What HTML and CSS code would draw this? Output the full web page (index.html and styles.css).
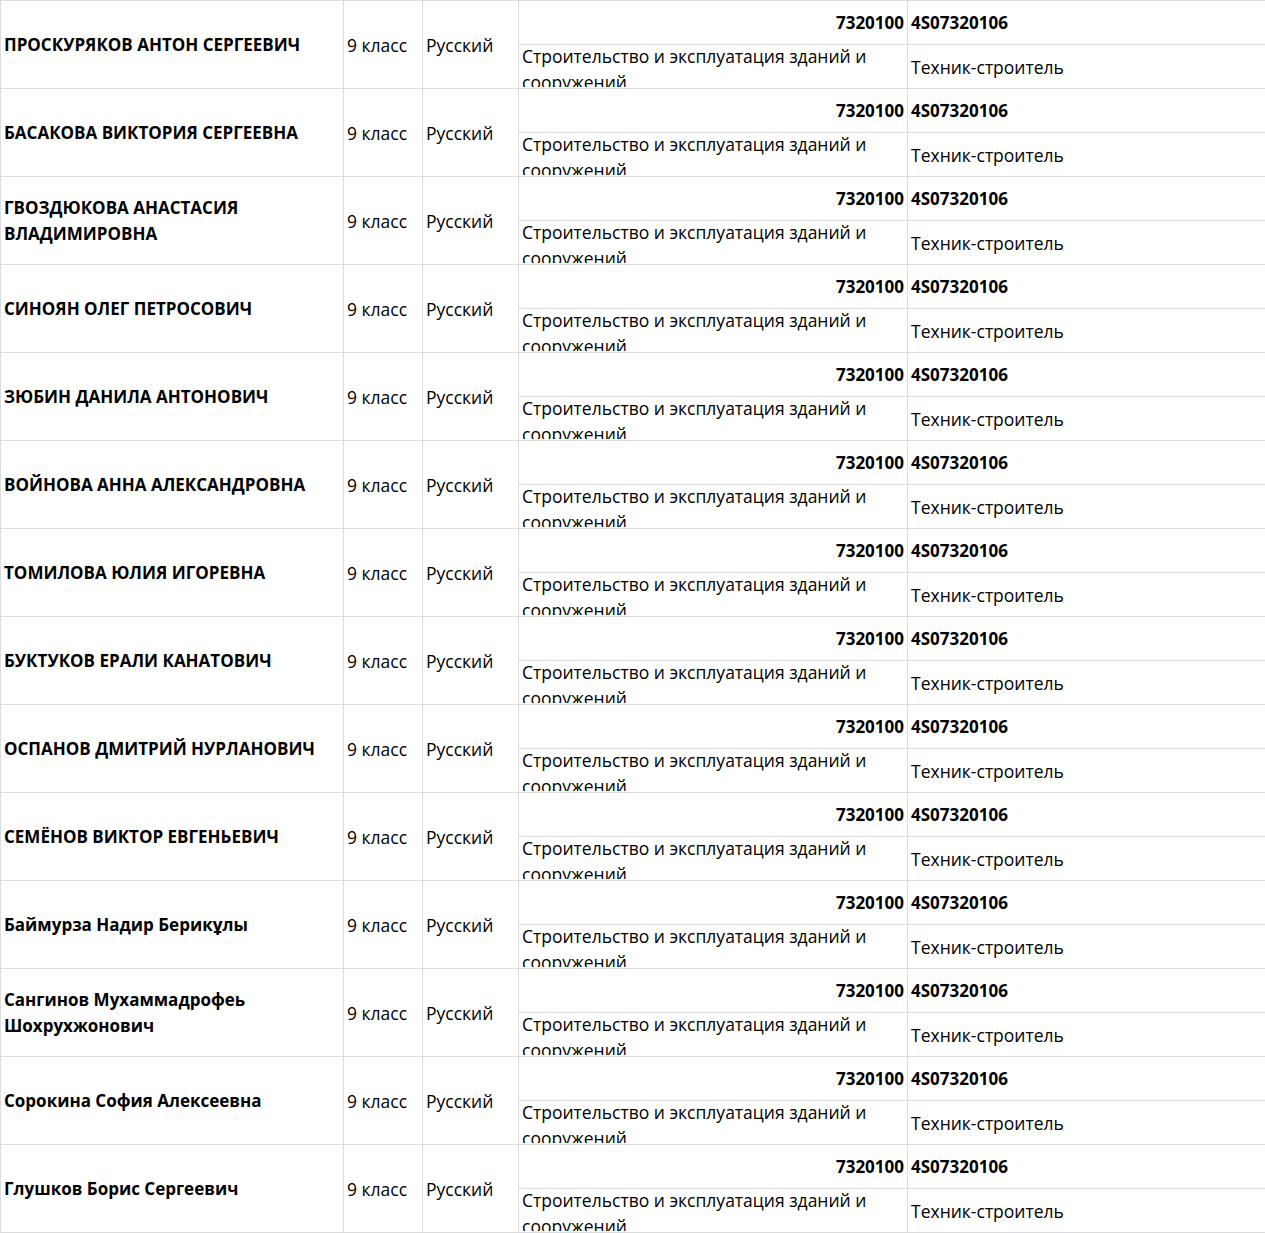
FILE: index.html
```html
<!DOCTYPE html>
<html lang="ru">
<head>
    <meta charset="UTF-8">
    <meta name="viewport" content="width=device-width, initial-scale=1.0">
    <title>Список абитуриентов</title>
    <link rel="stylesheet" href="styles.css">
</head>
<body>
    <table class="sheet">
        <colgroup>
            <col class="col-name">
            <col class="col-grade">
            <col class="col-lang">
            <col class="col-spec">
            <col class="col-qual">
        </colgroup>
        <tbody>
            <tr>
                <td class="name" rowspan="2">ПРОСКУРЯКОВ АНТОН СЕРГЕЕВИЧ</td>
                <td class="plain" rowspan="2">9 класс</td>
                <td class="plain" rowspan="2">Русский</td>
                <td class="code">7320100</td>
                <td class="qcode">4S07320106</td>
            </tr>
            <tr>
                <td class="spec"><div class="spec-text">Строительство и эксплуатация зданий и сооружений</div></td>
                <td class="qual">Техник-строитель</td>
            </tr>

            <tr>
                <td class="name" rowspan="2">БАСАКОВА ВИКТОРИЯ СЕРГЕЕВНА</td>
                <td class="plain" rowspan="2">9 класс</td>
                <td class="plain" rowspan="2">Русский</td>
                <td class="code">7320100</td>
                <td class="qcode">4S07320106</td>
            </tr>
            <tr>
                <td class="spec"><div class="spec-text">Строительство и эксплуатация зданий и сооружений</div></td>
                <td class="qual">Техник-строитель</td>
            </tr>

            <tr>
                <td class="name" rowspan="2">ГВОЗДЮКОВА АНАСТАСИЯ<br>ВЛАДИМИРОВНА</td>
                <td class="plain" rowspan="2">9 класс</td>
                <td class="plain" rowspan="2">Русский</td>
                <td class="code">7320100</td>
                <td class="qcode">4S07320106</td>
            </tr>
            <tr>
                <td class="spec"><div class="spec-text">Строительство и эксплуатация зданий и сооружений</div></td>
                <td class="qual">Техник-строитель</td>
            </tr>

            <tr>
                <td class="name" rowspan="2">СИНОЯН ОЛЕГ ПЕТРОСОВИЧ</td>
                <td class="plain" rowspan="2">9 класс</td>
                <td class="plain" rowspan="2">Русский</td>
                <td class="code">7320100</td>
                <td class="qcode">4S07320106</td>
            </tr>
            <tr>
                <td class="spec"><div class="spec-text">Строительство и эксплуатация зданий и сооружений</div></td>
                <td class="qual">Техник-строитель</td>
            </tr>

            <tr>
                <td class="name" rowspan="2">ЗЮБИН ДАНИЛА АНТОНОВИЧ</td>
                <td class="plain" rowspan="2">9 класс</td>
                <td class="plain" rowspan="2">Русский</td>
                <td class="code">7320100</td>
                <td class="qcode">4S07320106</td>
            </tr>
            <tr>
                <td class="spec"><div class="spec-text">Строительство и эксплуатация зданий и сооружений</div></td>
                <td class="qual">Техник-строитель</td>
            </tr>

            <tr>
                <td class="name" rowspan="2">ВОЙНОВА АННА АЛЕКСАНДРОВНА</td>
                <td class="plain" rowspan="2">9 класс</td>
                <td class="plain" rowspan="2">Русский</td>
                <td class="code">7320100</td>
                <td class="qcode">4S07320106</td>
            </tr>
            <tr>
                <td class="spec"><div class="spec-text">Строительство и эксплуатация зданий и сооружений</div></td>
                <td class="qual">Техник-строитель</td>
            </tr>

            <tr>
                <td class="name" rowspan="2">ТОМИЛОВА ЮЛИЯ ИГОРЕВНА</td>
                <td class="plain" rowspan="2">9 класс</td>
                <td class="plain" rowspan="2">Русский</td>
                <td class="code">7320100</td>
                <td class="qcode">4S07320106</td>
            </tr>
            <tr>
                <td class="spec"><div class="spec-text">Строительство и эксплуатация зданий и сооружений</div></td>
                <td class="qual">Техник-строитель</td>
            </tr>

            <tr>
                <td class="name" rowspan="2">БУКТУКОВ ЕРАЛИ КАНАТОВИЧ</td>
                <td class="plain" rowspan="2">9 класс</td>
                <td class="plain" rowspan="2">Русский</td>
                <td class="code">7320100</td>
                <td class="qcode">4S07320106</td>
            </tr>
            <tr>
                <td class="spec"><div class="spec-text">Строительство и эксплуатация зданий и сооружений</div></td>
                <td class="qual">Техник-строитель</td>
            </tr>

            <tr>
                <td class="name" rowspan="2">ОСПАНОВ ДМИТРИЙ НУРЛАНОВИЧ</td>
                <td class="plain" rowspan="2">9 класс</td>
                <td class="plain" rowspan="2">Русский</td>
                <td class="code">7320100</td>
                <td class="qcode">4S07320106</td>
            </tr>
            <tr>
                <td class="spec"><div class="spec-text">Строительство и эксплуатация зданий и сооружений</div></td>
                <td class="qual">Техник-строитель</td>
            </tr>

            <tr>
                <td class="name" rowspan="2">СЕМЁНОВ ВИКТОР ЕВГЕНЬЕВИЧ</td>
                <td class="plain" rowspan="2">9 класс</td>
                <td class="plain" rowspan="2">Русский</td>
                <td class="code">7320100</td>
                <td class="qcode">4S07320106</td>
            </tr>
            <tr>
                <td class="spec"><div class="spec-text">Строительство и эксплуатация зданий и сооружений</div></td>
                <td class="qual">Техник-строитель</td>
            </tr>

            <tr>
                <td class="name" rowspan="2">Баймурза Надир Берикұлы</td>
                <td class="plain" rowspan="2">9 класс</td>
                <td class="plain" rowspan="2">Русский</td>
                <td class="code">7320100</td>
                <td class="qcode">4S07320106</td>
            </tr>
            <tr>
                <td class="spec"><div class="spec-text">Строительство и эксплуатация зданий и сооружений</div></td>
                <td class="qual">Техник-строитель</td>
            </tr>

            <tr>
                <td class="name" rowspan="2">Сангинов Мухаммадрофеь<br>Шохрухжонович</td>
                <td class="plain" rowspan="2">9 класс</td>
                <td class="plain" rowspan="2">Русский</td>
                <td class="code">7320100</td>
                <td class="qcode">4S07320106</td>
            </tr>
            <tr>
                <td class="spec"><div class="spec-text">Строительство и эксплуатация зданий и сооружений</div></td>
                <td class="qual">Техник-строитель</td>
            </tr>

            <tr>
                <td class="name" rowspan="2">Сорокина София Алексеевна</td>
                <td class="plain" rowspan="2">9 класс</td>
                <td class="plain" rowspan="2">Русский</td>
                <td class="code">7320100</td>
                <td class="qcode">4S07320106</td>
            </tr>
            <tr>
                <td class="spec"><div class="spec-text">Строительство и эксплуатация зданий и сооружений</div></td>
                <td class="qual">Техник-строитель</td>
            </tr>

            <tr>
                <td class="name" rowspan="2">Глушков Борис Сергеевич</td>
                <td class="plain" rowspan="2">9 класс</td>
                <td class="plain" rowspan="2">Русский</td>
                <td class="code">7320100</td>
                <td class="qcode">4S07320106</td>
            </tr>
            <tr>
                <td class="spec"><div class="spec-text">Строительство и эксплуатация зданий и сооружений</div></td>
                <td class="qual">Техник-строитель</td>
            </tr>
        </tbody>
    </table>
</body>
</html>
```

FILE: styles.css
```css
:root {
    --grid-color: #dadcdd;
    --text-color: #000000;
    --bg-color: #ffffff;
}

body {
    margin: 0;
    padding: 0;
    background: var(--bg-color);
    color: var(--text-color);
    font-family: 'Open Sans', 'Noto Sans', sans-serif;
    font-size: 17.5px;
    line-height: 26px;
    overflow: hidden;
}

.sheet {
    width: 1265px;
    border-collapse: collapse;
    table-layout: fixed;
}

.col-name { width: 343px; }
.col-grade { width: 79px; }
.col-lang { width: 96px; }
.col-spec { width: 389px; }
.col-qual { width: 358px; }

.sheet td {
    height: 43px;
    padding: 0 3px;
    border: 1px solid var(--grid-color);
    white-space: nowrap;
    overflow: hidden;
}

.sheet td:last-child {
    border-right: none;
}

.name {
    font-size: 17px;
    font-weight: 700;
    vertical-align: middle;
}

.plain {
    vertical-align: middle;
}

.code {
    font-size: 17px;
    font-weight: 700;
    text-align: right;
    vertical-align: middle;
    padding-top: 2px;
}

.qcode {
    font-size: 17px;
    font-weight: 700;
    vertical-align: middle;
    padding-top: 2px;
}

.sheet td.spec {
    vertical-align: top;
    white-space: normal;
}

.spec-text {
    height: 44px;
    margin-top: -2px;
    overflow: hidden;
}

.qual {
    vertical-align: middle;
    padding-top: 2px;
}
```
